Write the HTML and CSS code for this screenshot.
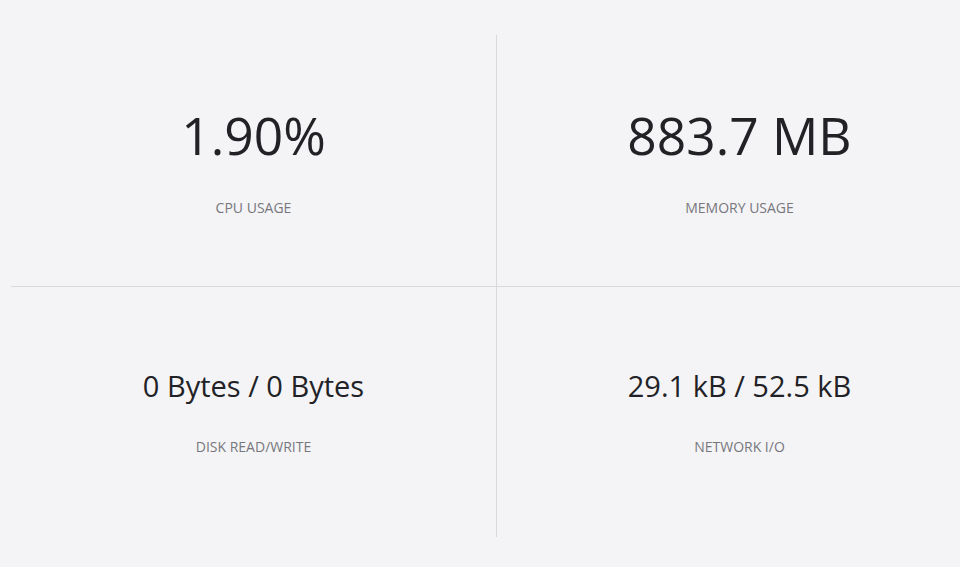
FILE: index.html
```html
<!DOCTYPE html>
<html>
<head>
<meta charset="utf-8">
<link rel="stylesheet" href="styles.css">
</head>
<body>
<div class="grid">
  <div class="cell top left">
    <div class="value big">1.90%</div>
    <div class="label">CPU USAGE</div>
  </div>
  <div class="cell top">
    <div class="value big">883.7 MB</div>
    <div class="label">MEMORY USAGE</div>
  </div>
  <div class="cell bottom left">
    <div class="value small">0 Bytes / 0 Bytes</div>
    <div class="label lower">DISK READ/WRITE</div>
  </div>
  <div class="cell bottom">
    <div class="value small">29.1 kB / 52.5 kB</div>
    <div class="label lower">NETWORK I/O</div>
  </div>
</div>
</body>
</html>
```
FILE: styles.css
```css
html, body {
  margin: 0;
  padding: 0;
  background: #f4f4f6;
  overflow: hidden;
  width: 960px;
  height: 567px;
  font-family: "Open Sans", "Liberation Sans", sans-serif;
}
.grid {
  display: grid;
  grid-template-columns: 486px 485px;
  width: 971px;
  margin: 35px 0 0 11px;
}
.cell {
  text-align: center;
  box-sizing: border-box;
}
.cell.left {
  border-right: 1px solid #d9d9dd;
}
.cell.top {
  height: 252px;
  border-bottom: 1px solid #d9d9dd;
  padding-top: 64px;
}
.cell.bottom {
  height: 250px;
  padding-top: 79px;
}
.value {
  color: #222226;
}
.value.big {
  font-size: 51.5px;
  line-height: 72px;
}
.value.small {
  font-size: 29px;
  line-height: 40px;
}
.label {
  font-size: 14px;
  line-height: 20px;
  color: #77777d;
  margin-top: 27px;
}
.label.lower {
  margin-top: 31px;
}
```
